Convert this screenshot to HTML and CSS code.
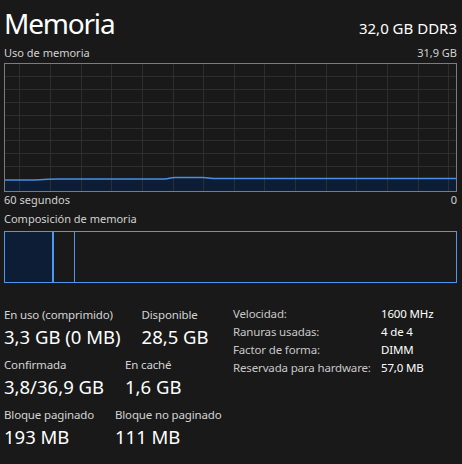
FILE: index.html
```html
<!DOCTYPE html>
<html lang="es">
<head>
<meta charset="utf-8">
<title>Memoria</title>
<link rel="stylesheet" href="styles.css">
</head>
<body>
<main class="page">
  <header class="header">
    <h1 class="title">Memoria</h1>
    <div class="capacity">32,0 GB DDR3</div>
  </header>

  <div class="caption-row">
    <span>Uso de memoria</span>
    <span>31,9 GB</span>
  </div>
  <div class="graph">
    <svg class="graph-svg" width="451" height="127" viewBox="0 0 451 127">
      <path class="fill" d="M0,116 L23,116 C35,116 42,115 53,115 L160,115 C164,115 165,113.5 170,113.5 L198,113.5 C203,113.5 204,114.5 208,114.5 L451,114.5 L451,127 L0,127 Z"/>
      <g class="grid">
        <rect x="14" y="0" width="1" height="127"/>
        <rect x="45" y="0" width="1" height="127"/>
        <rect x="76" y="0" width="1" height="127"/>
        <rect x="106" y="0" width="1" height="127"/>
        <rect x="137" y="0" width="1" height="127"/>
        <rect x="168" y="0" width="1" height="127"/>
        <rect x="198" y="0" width="1" height="127"/>
        <rect x="229" y="0" width="1" height="127"/>
        <rect x="259" y="0" width="1" height="127"/>
        <rect x="290" y="0" width="1" height="127"/>
        <rect x="321" y="0" width="1" height="127"/>
        <rect x="351" y="0" width="1" height="127"/>
        <rect x="382" y="0" width="1" height="127"/>
        <rect x="413" y="0" width="1" height="127"/>
        <rect x="443" y="0" width="1" height="127"/>
        <rect x="0" y="12" width="451" height="1"/>
        <rect x="0" y="25" width="451" height="1"/>
        <rect x="0" y="38" width="451" height="1"/>
        <rect x="0" y="51" width="451" height="1"/>
        <rect x="0" y="64" width="451" height="1"/>
        <rect x="0" y="76" width="451" height="1"/>
        <rect x="0" y="89" width="451" height="1"/>
        <rect x="0" y="102" width="451" height="1"/>
      </g>
      <path class="line" d="M0,116 L23,116 C35,116 42,115 53,115 L160,115 C164,115 165,113.5 170,113.5 L198,113.5 C203,113.5 204,114.5 208,114.5 L451,114.5"/>
    </svg>
  </div>
  <div class="caption-row axis">
    <span>60 segundos</span>
    <span>0</span>
  </div>

  <div class="caption-row comp-label">
    <span>Composición de memoria</span>
  </div>
  <div class="composition">
    <div class="seg seg-used"></div>
    <div class="seg seg-modified"></div>
    <div class="seg seg-rest"></div>
  </div>

  <section class="stats">
    <div class="stats-left">
      <div class="stat-row">
        <div class="stat">
          <div class="stat-label">En uso (comprimido)</div>
          <div class="stat-value">3,3 GB (0 MB)</div>
        </div>
        <div class="stat">
          <div class="stat-label">Disponible</div>
          <div class="stat-value">28,5 GB</div>
        </div>
      </div>
      <div class="stat-row">
        <div class="stat">
          <div class="stat-label">Confirmada</div>
          <div class="stat-value">3,8/36,9 GB</div>
        </div>
        <div class="stat">
          <div class="stat-label">En caché</div>
          <div class="stat-value">1,6 GB</div>
        </div>
      </div>
      <div class="stat-row">
        <div class="stat">
          <div class="stat-label">Bloque paginado</div>
          <div class="stat-value">193 MB</div>
        </div>
        <div class="stat">
          <div class="stat-label">Bloque no paginado</div>
          <div class="stat-value">111 MB</div>
        </div>
      </div>
    </div>
    <dl class="specs">
      <dt>Velocidad:</dt><dd>1600 MHz</dd>
      <dt>Ranuras usadas:</dt><dd>4 de 4</dd>
      <dt>Factor de forma:</dt><dd>DIMM</dd>
      <dt>Reservada para hardware:</dt><dd>57,0 MB</dd>
    </dl>
  </section>
</main>
</body>
</html>
```

FILE: styles.css
```css
* { box-sizing: border-box; }

html, body {
  margin: 0;
  padding: 0;
  background: #191919;
  width: 462px;
  height: 464px;
  overflow: hidden;
}

body {
  font-family: "Segoe UI", "Noto Sans", sans-serif;
  color: #ffffff;
  white-space: nowrap;
}

.page {
  padding: 0 5px 0 4px;
}

.header {
  display: flex;
  justify-content: space-between;
  align-items: baseline;
  height: 46px;
  padding-top: 5px;
}

.title {
  margin: 0;
  font-size: 28px;
  font-weight: 400;
  line-height: 36px;
  letter-spacing: -1.2px;
  color: #ffffff;
}

.capacity {
  font-size: 15px;
  line-height: 36px;
  color: #ffffff;
}

.caption-row {
  display: flex;
  justify-content: space-between;
  font-size: 11px;
  line-height: 14px;
  color: #d2d2d2;
}

.axis {
  margin-top: 1px;
}

.comp-label {
  margin-top: 5px;
}

.graph {
  margin-top: 3px;
  width: 453px;
  height: 129px;
  border: 1px solid #7c7c7c;
}

.graph-svg {
  display: block;
}

.graph .fill {
  fill: #0e1d36;
}

.graph .grid rect {
  fill: #333333;
  fill-opacity: 0.8;
}

.graph .line {
  fill: none;
  stroke: #4a8fe4;
  stroke-width: 1.5;
}

.composition {
  margin-top: 5px;
  width: 453px;
  height: 52px;
  border: 1px solid #4f96f0;
  display: flex;
}

.seg {
  height: 100%;
}

.seg-used {
  width: 49px;
  background: #0e1d36;
  border-right: 2px solid #4f96f0;
}

.seg-modified {
  width: 21px;
  border-right: 1px solid #4f96f0;
}

.seg-rest {
  flex: 1;
}

.stats {
  margin-top: 22px;
  display: flex;
}

.stats-left {
  width: 229px;
  padding-top: 2px;
  display: flex;
  flex-direction: column;
  gap: 7px;
}

.stat-row {
  display: flex;
  gap: 21px;
}

.stat-label {
  font-size: 11.5px;
  line-height: 16px;
  letter-spacing: -0.15px;
  color: #d4d4d4;
}

.stat-value {
  margin-top: 1px;
  font-size: 18.5px;
  line-height: 26px;
  color: #ffffff;
}

.specs {
  margin: 0;
  display: grid;
  grid-template-columns: 148px auto;
  grid-auto-rows: 18px;
  font-size: 11.5px;
  line-height: 18px;
  letter-spacing: -0.15px;
}

.specs dt {
  color: #c8c8c8;
}

.specs dd {
  margin: 0;
  color: #ffffff;
}
```
